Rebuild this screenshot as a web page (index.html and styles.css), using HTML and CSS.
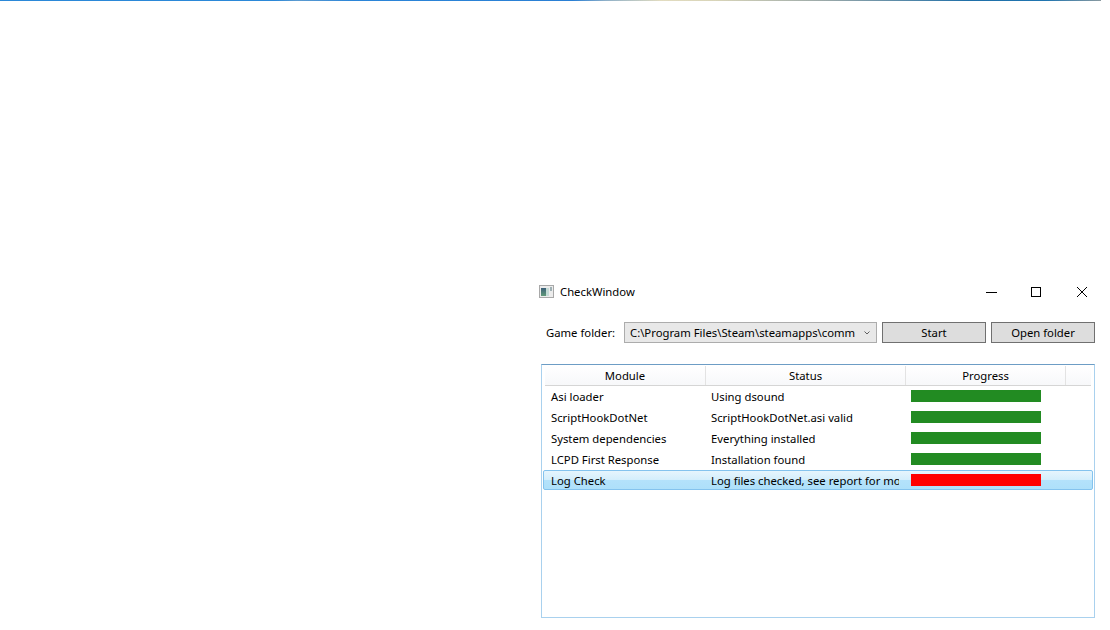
FILE: index.html
```html
<!DOCTYPE html>
<html lang="en">
<head>
<meta charset="utf-8">
<title>CheckWindow</title>
<link rel="stylesheet" href="styles.css">
</head>
<body>
<div class="accent"></div>
<main class="window">
  <header class="titlebar">
    <svg class="app-icon" width="16" height="16" viewBox="0 0 16 16">
      <defs><linearGradient id="pane" x1="0" y1="0" x2="0" y2="1"><stop offset="0" stop-color="#3b5f78"/><stop offset="1" stop-color="#5f9a78"/></linearGradient></defs>
      <rect x="0.5" y="1.5" width="14" height="12" fill="#ececec" stroke="#a8a8a8"/>
      <rect x="2" y="4" width="5" height="8" fill="url(#pane)"/>
      <rect x="7" y="4" width="3" height="8" fill="#c4dbd6"/>
      <rect x="11" y="3" width="2" height="4" fill="#9fb0b4"/>
    </svg>
    <span class="title">CheckWindow</span>
    <div class="controls">
      <svg width="12" height="12" viewBox="0 0 12 12"><path d="M1 6.5H12" stroke="#000" fill="none"/></svg>
      <svg width="12" height="12" viewBox="0 0 12 12"><rect x="1.5" y="1.5" width="9" height="9" stroke="#000" fill="none"/></svg>
      <svg width="13" height="12" viewBox="0 0 13 12"><path d="M2 1L12 11M12 1L2 11" stroke="#000" fill="none"/></svg>
    </div>
  </header>
  <div class="toolbar">
    <label class="folder-label">Game folder:</label>
    <div class="combo">
      <span class="combo-text">C:\Program Files\Steam\steamapps\common</span>
      <svg class="chev" width="6" height="4" viewBox="0 0 6 4"><path d="M0.5 0.5L3 3L5.5 0.5" stroke="#606060" fill="none"/></svg>
    </div>
    <button class="btn">Start</button>
    <button class="btn">Open folder</button>
  </div>
  <section class="list">
    <div class="head">
      <div class="hcell c1">Module</div>
      <div class="hcell c2">Status</div>
      <div class="hcell c3">Progress</div>
      <div class="hcell c4"></div>
    </div>
    <div class="row"><div class="cell c1">Asi loader</div><div class="cell c2">Using dsound</div><div class="cell c3"><div class="bar ok"></div></div></div>
    <div class="row"><div class="cell c1">ScriptHookDotNet</div><div class="cell c2">ScriptHookDotNet.asi valid</div><div class="cell c3"><div class="bar ok"></div></div></div>
    <div class="row"><div class="cell c1">System dependencies</div><div class="cell c2">Everything installed</div><div class="cell c3"><div class="bar ok"></div></div></div>
    <div class="row"><div class="cell c1">LCPD First Response</div><div class="cell c2">Installation found</div><div class="cell c3"><div class="bar ok"></div></div></div>
    <div class="row selected"><div class="cell c1">Log Check</div><div class="cell c2">Log files checked, see report for more details</div><div class="cell c3"><div class="bar bad"></div></div></div>
  </section>
</main>
</body>
</html>
```
FILE: styles.css
```css
* { box-sizing: border-box; }
html, body { margin: 0; padding: 0; background: #fff; overflow: hidden; }
body { width: 1110px; height: 630px; font: 11.3px/16px "Noto Sans", sans-serif; color: #000; }
.accent {
  height: 1px; width: 1101px;
  background: linear-gradient(90deg, #2b88d8 0, #2b88d8 25%, #5d9bd0 27%, #2b85d8 32%, #2a7fd4 52%, #8fb0c8 55%, #e2dcc0 60%, #d8d4b8 65%, #9aa8a8 75%, #1f6fa8 88%, #2075b0 95%, #8a9aa0 100%);
}
.window { width: 560px; margin: 280px 0 0 535px; display: flex; flex-direction: column; }
.titlebar { height: 21px; display: flex; align-items: center; padding-left: 4px; }
.title { margin-left: 5px; }
.controls { margin-left: auto; display: flex; gap: 33px; margin-right: 7px; }
.toolbar { display: flex; align-items: stretch; height: 21px; margin-top: 20px; padding-left: 11px; }
.folder-label { line-height: 21px; width: 78px; }
.combo { width: 253px; display: flex; align-items: center; background: #e8e8e8; border: 1px solid #acacac; padding: 0 5px; }
.combo-text { width: 225px; overflow: hidden; white-space: nowrap; }
.chev { margin-left: auto; margin-right: 1px; }
.btn { width: 104px; margin-left: 5px; border: 1px solid #707070; background: #dddddd; font: inherit; color: #000; padding: 0; }
.list { margin: 21px 0 0 6px; height: 254px; border: 1px solid #a9d1ee; border-top-color: #6d9dc5; padding: 1px; }
.head { display: flex; height: 20px; margin: 0 2px; border-bottom: 1px solid #d5d5d5; }
.hcell { text-align: center; line-height: 19px; border-right: 1px solid #e3e3e3; background: linear-gradient(#fff, #f7f8fa); }
.hcell.c4 { border-right: 0; flex: 1; }
.head .c1 { width: 161px; }
.head .c2 { width: 200px; }
.head .c3 { width: 160px; }
.row { display: flex; height: 21px; padding-left: 2px; align-items: center; }
.cell { white-space: nowrap; overflow: hidden; }
.cell.c1 { width: 166px; padding-left: 6px; }
.cell.c2 { width: 188px; }
.cell.c3 { margin-left: 12px; width: 130px; align-self: flex-start; padding-top: 4px; }
.bar { height: 12px; width: 130px; }
.ok { background: #228b22; }
.bad { background: #ff0000; }
.row.selected { height: 20px; border: 1px solid #84c3ee; border-radius: 2px; background: linear-gradient(#e6f5fd 0, #d3eefc 50%, #b4e2fb 50%, #aee0fa 100%); padding: 2px 0 0 1px; }
.row.selected .c3 { margin-top: -2px; padding-top: 3px; }
```
